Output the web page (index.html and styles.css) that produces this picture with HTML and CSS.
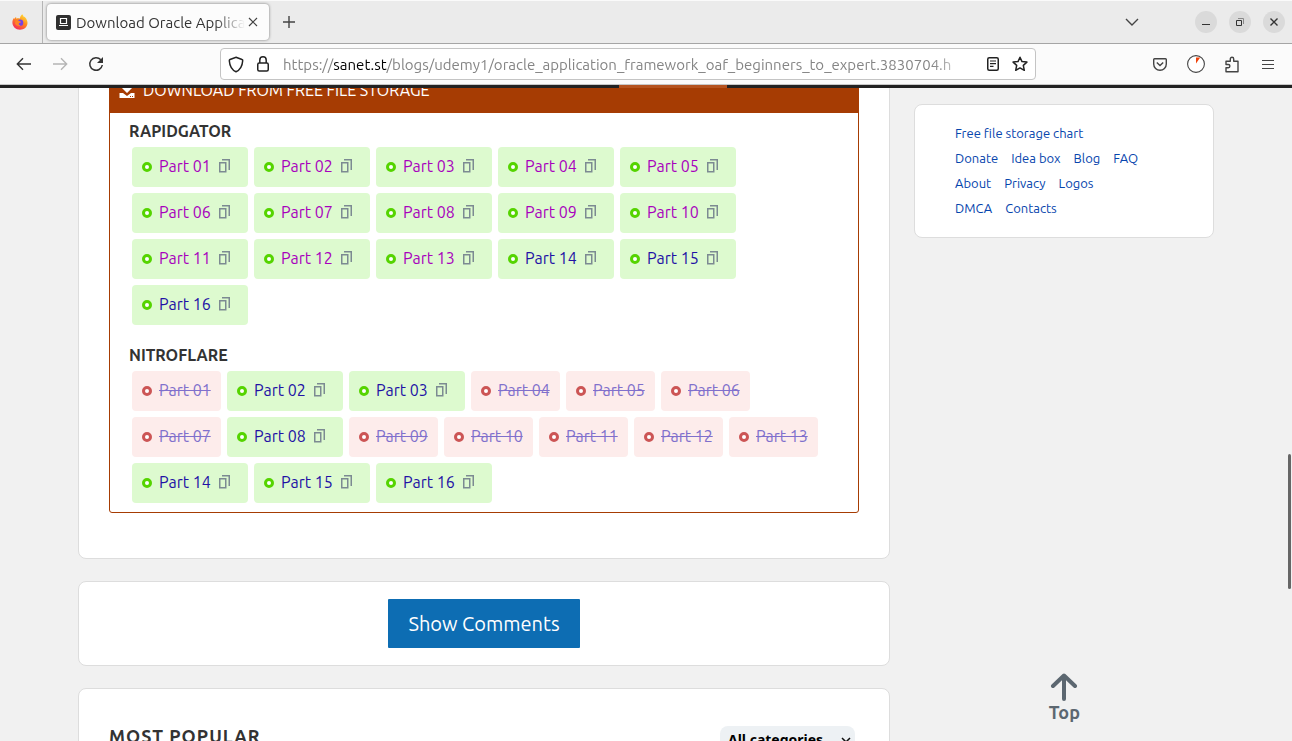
FILE: index.html
```html
<!DOCTYPE html>
<html lang="en">
<head>
<meta charset="utf-8">
<title>Download Oracle Application Framework</title>
<link rel="stylesheet" href="styles.css">
</head>
<body>
<svg class="sprite" aria-hidden="true">
  <symbol id="copy" viewBox="0 0 11 14"><path d="M.75 3.75h6v9h-6zM3 .75h7.25V11" fill="none" stroke="currentColor" stroke-width="1.5"/></symbol>
</svg>
<div class="browser">
  <header class="tabstrip">
    <button class="pinned" aria-label="Firefox View">
      <svg width="16" height="16" viewBox="0 0 16 16"><defs><linearGradient id="flame" x1="0.8" y1="0" x2="0.2" y2="1"><stop offset="0" stop-color="#ffe33a"/><stop offset=".45" stop-color="#ff8a1c"/><stop offset="1" stop-color="#f51e62"/></linearGradient></defs><path d="M10.2.3C11 1 11.3 1.8 11.4 2.6c.6-.1 1.1.3 1.6.7.2.2 2.7 2.7 2.5 6C15.300 13 12 15.800 8 15.800 3.800 15.800.4 12.700.4 8.600c0-1.900.6-3.500 1.500-4.700l.3 1.200c.5-1.100 1.200-1.700 1.900-2.100l.2 1.700c1.200-.7 2.500-.6 3.700-.1C8 2.900 8.800 1.400 10.200.3z" fill="url(#flame)"/><circle cx="8" cy="8.800" r="3.300" fill="#7542e5"/><path d="M3.600 6.500c1-.8 2.400-.8 3.700.4.700.6 1.800.5 1.700 1-.2.700-1.800.6-2.200 1.600-.4 1 .9 2 2 1.900-2 1.400-5.500.2-5.800-2.400z" fill="#ff8426"/></svg>
    </button>
    <div class="tab">
      <svg width="15" height="15" viewBox="0 0 15 15"><rect width="15" height="15" rx="2" fill="#303030"/><path d="M4.500 3.500h6v5h-6zM3 10.500h9" fill="none" stroke="#fff" stroke-width="1.200"/></svg>
      <span class="tab-title">Download Oracle Applica</span>
      <button class="close" aria-label="Close tab"><svg width="10" height="10" viewBox="0 0 10 10"><path d="M1 1l8 8M9 1L1 9" stroke="#444" stroke-width="1.200"/></svg></button>
    </div>
    <button class="newtab" aria-label="New tab"><svg width="14" height="14" viewBox="0 0 14 14"><path d="M7 1v12M1 7h12" stroke="#444" stroke-width="1.400"/></svg></button>
    <button class="listtabs" aria-label="List all tabs"><svg width="14" height="8" viewBox="0 0 14 8"><path d="M1 1l6 6 6-6" fill="none" stroke="#444" stroke-width="1.400"/></svg></button>
    <div class="window-buttons">
      <button class="round" aria-label="Minimize"><svg width="10" height="10" viewBox="0 0 10 10"><path d="M1 7.500h8" stroke="#333"/></svg></button>
      <button class="round" aria-label="Restore"><svg width="10" height="10" viewBox="0 0 10 10"><path d="M1.500 3.500h5v5h-5z" fill="none" stroke="#333"/><path d="M3 1.500h5.500V7" fill="none" stroke="#888"/></svg></button>
      <button class="round" aria-label="Close window"><svg width="10" height="10" viewBox="0 0 10 10"><path d="M1.500 1.500l7 7M8.500 1.500l-7 7" stroke="#333" stroke-width="1.400"/></svg></button>
    </div>
  </header>
  <div class="toolbar">
    <nav class="history">
      <button aria-label="Back"><svg width="16" height="14" viewBox="0 0 16 14"><path d="M15 7H1.500M7 1.200L1.300 7 7 12.800" fill="none" stroke="#333" stroke-width="1.400"/></svg></button>
      <button aria-label="Forward"><svg width="16" height="14" viewBox="0 0 16 14"><path d="M1 7h13.500M9 1.200L14.700 7 9 12.800" fill="none" stroke="#b5b5b5" stroke-width="1.400"/></svg></button>
      <button aria-label="Reload"><svg width="16" height="16" viewBox="0 0 16 16"><path d="M12.800 3.800A6.300 6.300 0 1 0 14.300 9" fill="none" stroke="#333" stroke-width="1.500"/><path d="M15 1v6H9z" fill="#333"/></svg></button>
    </nav>
    <div class="urlbar">
      <svg width="16" height="17" viewBox="0 0 16 17"><path d="M8 1.200l6 2.300c.6.200.8.600.7 1.200C14.300 10 12 14 8 15.700 4 14 1.700 10 1.300 4.700c0-.6.200-1 .7-1.200z" fill="none" stroke="#222" stroke-width="1.500"/></svg>
      <svg width="12" height="16" viewBox="0 0 12 16"><path d="M2.800 7V4a3.200 3.200 0 0 1 6.400 0v3" fill="none" stroke="#222" stroke-width="1.500"/><rect x=".75" y="7" width="10.500" height="8" rx="1.500" fill="none" stroke="#222" stroke-width="1.500"/></svg>
      <span class="url">https://<b>sanet.st</b>/blogs/udemy1/oracle_application_framework_oaf_beginners_to_expert.3830704.h</span>
      <button aria-label="Reader view"><svg width="12" height="14" viewBox="0 0 12 14"><rect x=".75" y=".75" width="10.500" height="12.500" rx="1.500" fill="none" stroke="#222" stroke-width="1.500"/><path d="M3 4h6M3 6.700h6M3 9.400h3.500" stroke="#222" stroke-width="1.200"/></svg></button>
      <button aria-label="Bookmark"><svg width="16" height="16" viewBox="0 0 16 16"><path d="M8 1.200l2 4.400 4.900.5-3.600 3.300 1 4.900L8 11.900l-4.300 2.400 1-4.900L1.100 6.100 6 5.600z" fill="none" stroke="#222" stroke-width="1.500" stroke-linejoin="round"/></svg></button>
    </div>
    <div class="tools">
      <button aria-label="Pocket"><svg width="14" height="13" viewBox="0 0 14 13"><path d="M1.500.8h11c.5 0 .8.300.8.800V6a6.300 6.300 0 0 1-12.600 0V1.600c0-.5.300-.8.800-.8z" fill="none" stroke="#444" stroke-width="1.400"/><path d="M3.800 4.500L7 7.600l3.200-3.100" fill="none" stroke="#444" stroke-width="1.400"/></svg></button>
      <button aria-label="Extension"><svg width="18" height="18" viewBox="0 0 18 18"><circle cx="9" cy="9" r="8.400" fill="#fff" stroke="#444" stroke-width="1.100"/><path d="M9 8.500V2.500h4.200z" fill="#f0430b"/></svg></button>
      <button aria-label="Extensions"><svg width="14" height="17" viewBox="0 0 14 17"><path d="M1 15.700v-4h2.300a1.500 1.500 0 0 0 0-3.200H1V5.200h4.300V3a1.700 1.700 0 0 1 3.400 0v2.200H13v10.500z" fill="none" stroke="#444" stroke-width="1.400" stroke-linejoin="round"/></svg></button>
      <button aria-label="Menu"><svg width="12" height="11" viewBox="0 0 12 11"><path d="M0 1.500h12M0 5.500h12M0 9.500h12" stroke="#444" stroke-width="1.200"/></svg></button>
    </div>
  </div>
  <div class="viewport">
    <div class="sitebar"><span class="sitebar-active"></span></div>
    <div class="page">
      <main class="main">
        <section class="card downloads">
          <div class="box">
            <h2 class="box-title"><svg width="16" height="15" viewBox="0 0 16 15"><path d="M6 0h4v4h4L8 10 2 4h4z" fill="#fff"/><path d="M.5 10H4l4 3 4-3h3.500v5H.5z" fill="#fff"/><path d="M11 13.500h1M13 13.500h1" stroke="#a63c03"/></svg>DOWNLOAD FROM FREE FILE STORAGE</h2>
            <div class="box-body">
              <h3>RAPIDGATOR</h3>
              <ul class="chips">
                <li class="chip seen"><a href="#">Part 01</a><button aria-label="Copy"><svg><use href="#copy"/></svg></button></li>
                <li class="chip seen"><a href="#">Part 02</a><button aria-label="Copy"><svg><use href="#copy"/></svg></button></li>
                <li class="chip seen"><a href="#">Part 03</a><button aria-label="Copy"><svg><use href="#copy"/></svg></button></li>
                <li class="chip seen"><a href="#">Part 04</a><button aria-label="Copy"><svg><use href="#copy"/></svg></button></li>
                <li class="chip seen"><a href="#">Part 05</a><button aria-label="Copy"><svg><use href="#copy"/></svg></button></li>
                <li class="chip seen"><a href="#">Part 06</a><button aria-label="Copy"><svg><use href="#copy"/></svg></button></li>
                <li class="chip seen"><a href="#">Part 07</a><button aria-label="Copy"><svg><use href="#copy"/></svg></button></li>
                <li class="chip seen"><a href="#">Part 08</a><button aria-label="Copy"><svg><use href="#copy"/></svg></button></li>
                <li class="chip seen"><a href="#">Part 09</a><button aria-label="Copy"><svg><use href="#copy"/></svg></button></li>
                <li class="chip seen"><a href="#">Part 10</a><button aria-label="Copy"><svg><use href="#copy"/></svg></button></li>
                <li class="chip seen"><a href="#">Part 11</a><button aria-label="Copy"><svg><use href="#copy"/></svg></button></li>
                <li class="chip seen"><a href="#">Part 12</a><button aria-label="Copy"><svg><use href="#copy"/></svg></button></li>
                <li class="chip seen"><a href="#">Part 13</a><button aria-label="Copy"><svg><use href="#copy"/></svg></button></li>
                <li class="chip"><a href="#">Part 14</a><button aria-label="Copy"><svg><use href="#copy"/></svg></button></li>
                <li class="chip"><a href="#">Part 15</a><button aria-label="Copy"><svg><use href="#copy"/></svg></button></li>
                <li class="chip"><a href="#">Part 16</a><button aria-label="Copy"><svg><use href="#copy"/></svg></button></li>
              </ul>
              <h3>NITROFLARE</h3>
              <ul class="chips">
                <li class="chip dead"><a href="#">Part 01</a></li>
                <li class="chip"><a href="#">Part 02</a><button aria-label="Copy"><svg><use href="#copy"/></svg></button></li>
                <li class="chip"><a href="#">Part 03</a><button aria-label="Copy"><svg><use href="#copy"/></svg></button></li>
                <li class="chip dead"><a href="#">Part 04</a></li>
                <li class="chip dead"><a href="#">Part 05</a></li>
                <li class="chip dead"><a href="#">Part 06</a></li>
                <li class="chip dead"><a href="#">Part 07</a></li>
                <li class="chip"><a href="#">Part 08</a><button aria-label="Copy"><svg><use href="#copy"/></svg></button></li>
                <li class="chip dead"><a href="#">Part 09</a></li>
                <li class="chip dead"><a href="#">Part 10</a></li>
                <li class="chip dead"><a href="#">Part 11</a></li>
                <li class="chip dead"><a href="#">Part 12</a></li>
                <li class="chip dead"><a href="#">Part 13</a></li>
                <li class="chip"><a href="#">Part 14</a><button aria-label="Copy"><svg><use href="#copy"/></svg></button></li>
                <li class="chip"><a href="#">Part 15</a><button aria-label="Copy"><svg><use href="#copy"/></svg></button></li>
                <li class="chip"><a href="#">Part 16</a><button aria-label="Copy"><svg><use href="#copy"/></svg></button></li>
              </ul>
            </div>
          </div>
        </section>
        <section class="card comments"><button class="show-comments">Show Comments</button></section>
        <section class="card popular">
          <h2>MOST POPULAR</h2>
          <div class="picker">
            <select aria-label="Category"><option>All categories</option></select>
            <svg width="10" height="6" viewBox="0 0 10 6"><path d="M1 1l4 4 4-4" fill="none" stroke="#111" stroke-width="1.500"/></svg>
          </div>
        </section>
      </main>
      <aside class="card links">
        <div><a href="#">Free file storage chart</a></div>
        <div><a href="#">Donate</a><a href="#">Idea box</a><a href="#">Blog</a><a href="#">FAQ</a></div>
        <div><a href="#">About</a><a href="#">Privacy</a><a href="#">Logos</a></div>
        <div><a href="#">DMCA</a><a href="#">Contacts</a></div>
      </aside>
    </div>
    <a class="to-top" href="#"><svg width="28" height="28" viewBox="0 0 28 28"><path d="M14 26V3M3 13L14 2.500 25 13" fill="none" stroke="#5c6770" stroke-width="4" stroke-linecap="round" stroke-linejoin="round"/></svg>Top</a>
    <div class="scroll-thumb"></div>
  </div>
</div>
</body>
</html>
```
FILE: styles.css
```css
*, *::before { box-sizing: border-box; }
body { margin: 0; font-family: Ubuntu, "Noto Sans", sans-serif; font-size: 16px; color: #333; }
h2, h3, ul { margin: 0; padding: 0; }
a { text-decoration: none; }
svg { display: block; flex: none; }
button { display: flex; align-items: center; justify-content: center; border: 0; padding: 0; background: none; font: inherit; color: inherit; flex: none; }
.sprite { position: absolute; width: 0; height: 0; }
.browser { display: flex; flex-direction: column; height: 100vh; overflow: hidden; }

.tabstrip { display: flex; align-items: center; height: 44px; flex: none; background: #ebebeb; border-bottom: 1px solid #a5a5a5; border-top: 1px solid #fafafa; }
.pinned { width: 43px; height: 100%; padding-right: 3px; border-right: 1px solid #b5b5b5; }
.tab { display: flex; align-items: center; width: 222px; height: 36px; margin-left: 4px; padding: 0 8px 0 9px; background: #fcfcfc; border-radius: 4px; box-shadow: 0 0 3px rgba(0, 0, 0, .5); }
.tab-title { flex: 1; min-width: 0; margin-left: 5px; overflow: hidden; white-space: nowrap; font-size: 15px; mask-image: linear-gradient(to right, #000 82%, transparent); }
.close { width: 16px; height: 16px; }
.newtab { width: 40px; height: 36px; }
.listtabs { width: 40px; height: 36px; margin-left: auto; }
.window-buttons { display: flex; gap: 12px; padding: 0 7px 0 43px; }
.round { width: 22px; height: 22px; border-radius: 50%; background: #dadada; }

.toolbar { display: flex; align-items: center; height: 41px; flex: none; background: #fbfbfb; border-bottom: 1px solid #c8c8c8; }
.history { display: flex; width: 220px; padding-left: 6px; }
.history button, .tools button { width: 36px; height: 32px; }
.urlbar { display: flex; align-items: center; flex: 1; min-width: 0; height: 32px; padding: 0 7px; gap: 13px; background: #fff; border: 1px solid #c4c4c4; border-radius: 4px; }
.url { flex: 1; min-width: 0; margin-left: 1px; overflow: hidden; white-space: nowrap; color: #858585; font-size: 15px; mask-image: linear-gradient(to right, #000 94%, transparent); }
.url b { font-weight: 400; color: #000; }
.tools { display: flex; justify-content: flex-end; width: 256px; padding-right: 6px; }

.viewport { position: relative; flex: 1; min-height: 0; overflow: hidden; background: #f1f1f1; }
.sitebar { position: absolute; top: 0; left: 0; right: 0; z-index: 2; height: 3px; background: #222; }
.sitebar-active { display: block; width: 108px; height: 3px; margin-left: 619px; background: #b5531f; }
.page { display: flex; align-items: flex-start; gap: 24px; max-width: 1136px; margin: 0 auto; }
.main { display: flex; flex-direction: column; gap: 22px; flex: 1; min-width: 0; margin-top: -47px; }
.card { background: #fff; border: 1px solid #ddd; border-radius: 8px; }
.downloads { padding: 30px 30px 45px; }
.box { border: 1px solid #a63c03; border-radius: 3px; }
.box-title { display: flex; align-items: center; gap: 8px; height: 43px; padding: 0 0 3px 9px; background: #a63c03; color: #fff; font-size: 16px; font-weight: 400; }
.box-body { padding: 6px 19px 9px; }
.box h3 { font-size: 16px; line-height: 24px; font-weight: 700; }
.chips { display: flex; flex-wrap: wrap; gap: 6px; list-style: none; padding: 4px 0 0 3px; }
.chips + h3 { margin-top: 18px; }
.chip { display: flex; align-items: center; height: 40px; padding: 0 10px; border-radius: 4px; background: #ddfacf; color: #55d400; }
.chip::before { content: ""; width: 10px; height: 10px; margin-right: 7px; border: 3px solid currentColor; border-radius: 50%; background: #fff; }
.chip a { min-width: 52px; line-height: 24px; padding-bottom: 2px; color: #2211a5; }
.chip button { margin: 0 8px; color: #7c8a92; padding-bottom: 3px; }
.chip button svg { width: 11px; height: 14px; }
.chip.seen a { color: #a800bd; }
.chip.dead { background: #fdeceb; color: #cc5555; }
.chip.dead a { color: #8070cc; text-decoration: line-through; }

.comments { display: flex; justify-content: center; padding: 17px; }
.show-comments { height: 49px; min-width: 192px; padding: 0 20px; border-radius: 1px; background: #0d6db3; color: #fff; font-size: 20px; }
.popular { display: flex; justify-content: space-between; align-items: flex-start; padding: 37px 34px 40px 30px; }
.popular h2 { font-size: 18px; line-height: 20px; letter-spacing: 1px; }
.picker { position: relative; width: 135px; }
.picker select { display: block; width: 100%; height: 27px; padding: 0 8px; border: 0; border-radius: 8px; background: #edf1f4; color: #000; font: 700 14px "Noto Sans", sans-serif; appearance: none; }
.picker svg { position: absolute; right: 4px; top: 11px; }

.links { width: 300px; flex: none; margin-top: 19px; padding: 16px 40px; font-size: 13px; line-height: 25px; }
.links div { display: flex; gap: 13px; }
.links a { color: #0645ad; }
.to-top { position: absolute; right: 212px; bottom: 18px; display: flex; flex-direction: column; align-items: center; color: #5c6770; font-size: 18px; line-height: 22px; font-weight: 700; }
.scroll-thumb { position: absolute; right: 1px; top: 369px; width: 3px; height: 135px; border-radius: 2px; background: #666; }
```
